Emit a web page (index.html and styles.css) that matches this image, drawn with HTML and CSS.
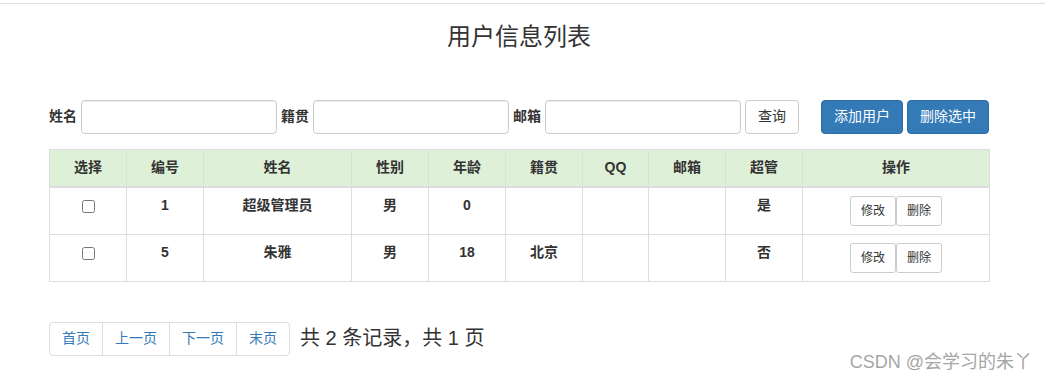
FILE: index.html
```html
<!DOCTYPE html>
<html lang="zh-CN">

<head>
    <meta charset="UTF-8">
    <title>用户信息列表</title>
    <link rel="stylesheet" href="styles.css">
</head>

<body>
    <div class="topline"></div>
    <div class="container">
        <h3>用户信息列表</h3>

        <div class="toolbar">
            <form class="search-form">
                <label>姓名</label>
                <input type="text" class="form-control">
                <label>籍贯</label>
                <input type="text" class="form-control">
                <label>邮箱</label>
                <input type="text" class="form-control">
                <button type="button" class="btn btn-default">查询</button>
            </form>
            <div class="actions">
                <button type="button" class="btn btn-primary">添加用户</button>
                <button type="button" class="btn btn-primary">删除选中</button>
            </div>
        </div>

        <table class="user-table">
            <colgroup>
                <col style="width: 77px">
                <col style="width: 77px">
                <col style="width: 148px">
                <col style="width: 77px">
                <col style="width: 77px">
                <col style="width: 77px">
                <col style="width: 66px">
                <col style="width: 77px">
                <col style="width: 77px">
                <col style="width: 187px">
            </colgroup>
            <thead>
                <tr>
                    <th>选择</th>
                    <th>编号</th>
                    <th>姓名</th>
                    <th>性别</th>
                    <th>年龄</th>
                    <th>籍贯</th>
                    <th>QQ</th>
                    <th>邮箱</th>
                    <th>超管</th>
                    <th>操作</th>
                </tr>
            </thead>
            <tbody>
                <tr>
                    <td><input type="checkbox" class="check"></td>
                    <td>1</td>
                    <td>超级管理员</td>
                    <td>男</td>
                    <td>0</td>
                    <td></td>
                    <td></td>
                    <td></td>
                    <td>是</td>
                    <td><button class="btn btn-sm">修改</button><button class="btn btn-sm">删除</button></td>
                </tr>
                <tr>
                    <td><input type="checkbox" class="check"></td>
                    <td>5</td>
                    <td>朱雅</td>
                    <td>男</td>
                    <td>18</td>
                    <td>北京</td>
                    <td></td>
                    <td></td>
                    <td>否</td>
                    <td><button class="btn btn-sm">修改</button><button class="btn btn-sm">删除</button></td>
                </tr>
            </tbody>
        </table>

        <div class="pager">
            <ul class="pagination">
                <li><a href="#">首页</a></li>
                <li><a href="#">上一页</a></li>
                <li><a href="#">下一页</a></li>
                <li><a href="#">末页</a></li>
            </ul>
            <span class="summary">共 2 条记录，共 1 页</span>
        </div>
    </div>

    <div class="watermark">CSDN @会学习的朱丫</div>
</body>

</html>
```

FILE: styles.css
```css
body {
    margin: 0;
    font-family: "Liberation Sans", "Noto Sans CJK SC", sans-serif;
    font-size: 14px;
    line-height: 1.42857;
    color: #333;
    background: #fff;
}

.topline {
    height: 3px;
    border-bottom: 1px solid #ddd;
}

.container {
    width: 940px;
    margin-left: 49px;
}

h3 {
    margin: 20px 0 0;
    font-size: 24px;
    font-weight: normal;
    line-height: 1.1;
    text-align: center;
}

.toolbar {
    display: flex;
    justify-content: space-between;
    align-items: center;
    margin-top: 50px;
}

.search-form {
    display: flex;
    align-items: center;
}

.search-form label {
    font-weight: bold;
    margin-right: 4px;
}

.form-control {
    box-sizing: border-box;
    width: 196px;
    height: 34px;
    padding: 6px 12px;
    margin-right: 4px;
    border: 1px solid #ccc;
    border-radius: 4px;
    font-size: 14px;
    box-shadow: inset 0 1px 1px rgba(0, 0, 0, 0.075);
}

.btn {
    box-sizing: border-box;
    height: 34px;
    padding: 6px 12px;
    font-family: inherit;
    font-size: 14px;
    line-height: 1.42857;
    color: #333;
    background: #fff;
    border: 1px solid #ccc;
    border-radius: 4px;
    cursor: pointer;
}

.actions {
    display: flex;
    gap: 4px;
}

.btn-primary {
    color: #fff;
    background: #337ab7;
    border-color: #2e6da4;
}

.btn-sm {
    height: 30px;
    padding: 5px 10px;
    font-size: 12px;
    line-height: 1.5;
    border-radius: 3px;
}

.user-table {
    width: 940px;
    margin-top: 15px;
    border-collapse: collapse;
    table-layout: fixed;
}

.user-table th,
.user-table td {
    padding: 8px;
    border: 1px solid #ddd;
    text-align: center;
    vertical-align: top;
    font-weight: bold;
}

.user-table thead th {
    background: #dff0d8;
    border-bottom-width: 2px;
}

.check {
    margin: 4px 0 0;
}

.pager {
    display: flex;
    align-items: center;
    margin-top: 40px;
}

.pagination {
    display: flex;
    margin: 0;
    padding: 0;
    list-style: none;
}

.pagination a {
    display: block;
    padding: 6px 12px;
    margin-left: -1px;
    color: #337ab7;
    text-decoration: none;
    border: 1px solid #ddd;
}

.pagination li:first-child a {
    margin-left: 0;
    border-radius: 4px 0 0 4px;
}

.pagination li:last-child a {
    border-radius: 0 4px 4px 0;
}

.summary {
    margin-left: 10px;
    margin-top: -3px;
    font-size: 20px;
}

.watermark {
    position: absolute;
    right: 13px;
    top: 350px;
    font-size: 18px;
    color: #a6a6a6;
}
```
